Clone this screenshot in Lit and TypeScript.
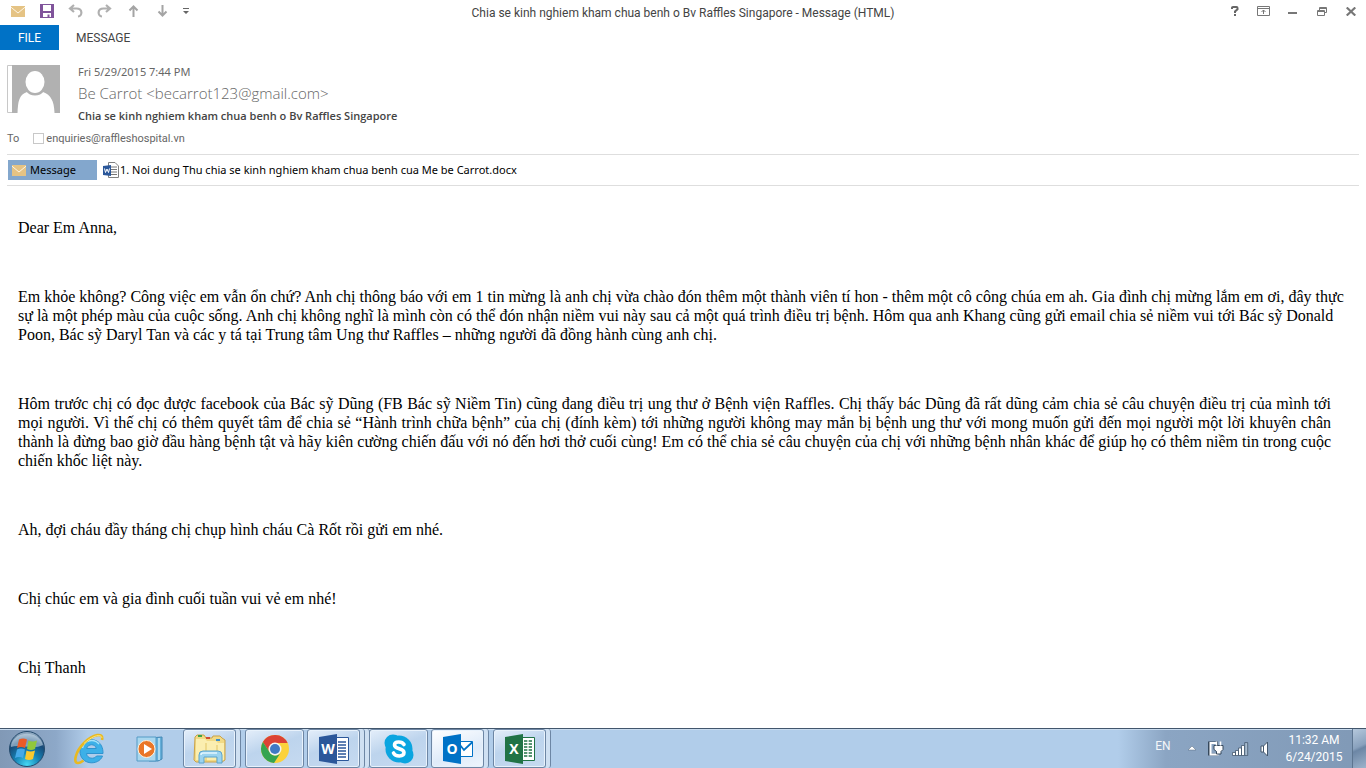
import { LitElement, html, css, svg } from "lit";
import { customElement } from "lit/decorators.js";

const envelope = html`<svg width="14" height="11" viewBox="0 0 14 11" aria-hidden="true">
  <rect width="14" height="11" fill="#e5c384" />
  <path d="M0 1.200L7 7l7-5.800" fill="none" stroke="#fdf6e6" stroke-width="1" />
</svg>`;

@customElement("title-bar")
export class TitleBar extends LitElement {
  static styles = css`
    :host { display: block; font-family: Roboto, "Open Sans", sans-serif; font-size: 12px; color: #444; }
    .bar { display: grid; grid-template-columns: 1fr auto 1fr; align-items: center; height: 25px; }
    .group { display: flex; align-items: center; height: 22px; }
    .quick { padding-left: 3px; align-self: start; }
    .window { justify-content: flex-end; align-self: start; padding-right: 1px; }
    h1 { margin: 0; font-size: 12px; font-weight: 400; line-height: 20px; }
    button { border: 0; padding: 0; background: none; width: 29px; height: 22px; display: grid; place-items: center; color: #777; }
    .narrow { width: 18px; }
    .tabs { display: flex; height: 25px; }
    .tab { width: auto; height: 25px; font: inherit; line-height: 24px; color: #444; padding: 1px 17px 0; }
    .file { width: 59px; background: #0072c6; color: #fff; padding: 1px 0 0; }
  `;
  render() {
    return html`
      <header class="bar">
        <div class="group quick">
          <button aria-label="Mail">${envelope}</button>
          <button aria-label="Save"><svg width="14" height="14" viewBox="0 0 14 14"><path d="M0 0h14v14H0z" fill="#80549b"/><path d="M3 1h8v6H3zM3 9h8v4H9.500v-2.500h-2V13H3z" fill="#fff"/></svg></button>
          <button aria-label="Undo"><svg width="15" height="14" viewBox="0 0 15 14" fill="none" stroke="#b0b0b0" stroke-width="2.200"><path d="M6 1L2 4.500 6 8M2 4.500h6.500c6.500 0 6 7.500 1.500 8"/></svg></button>
          <button aria-label="Redo"><svg width="15" height="14" viewBox="0 0 15 14" fill="none" stroke="#b0b0b0" stroke-width="2.200"><path d="M9 1l4 3.500L9 8M13 4.500H6.500c-6.500 0-6 7.500-1.500 8"/></svg></button>
          <button aria-label="Previous item"><svg width="11" height="12" viewBox="0 0 11 12" fill="none" stroke="#a4a4a4" stroke-width="2"><path d="M5.500 12V2M1.500 5.500l4-4 4 4"/></svg></button>
          <button aria-label="Next item"><svg width="11" height="12" viewBox="0 0 11 12" fill="none" stroke="#a4a4a4" stroke-width="2"><path d="M5.500 0v10M1.500 6.500l4 4 4-4"/></svg></button>
          <button class="narrow" aria-label="Customize toolbar"><svg width="6" height="6" viewBox="0 0 6 6" fill="#666"><path d="M0 0h6v1H0zM0 3h6L3 6z"/></svg></button>
        </div>
        <h1>Chia se kinh nghiem kham chua benh o Bv Raffles Singapore - Message (HTML)</h1>
        <div class="group window">
          <button aria-label="Help"><svg width="8" height="10" viewBox="0 0 8 10"><path d="M1 3V1.800Q1 1 2 1h3.500Q6.500 1 6.500 2v1.200L4 5.500V7" fill="none" stroke="#666" stroke-width="2"/><path d="M3 8h2v2H3z" fill="#666"/></svg></button>
          <button aria-label="Ribbon display options"><svg width="13" height="10" viewBox="0 0 13 10" fill="none" stroke="#777"><path d="M.5.500h12v9H.500zM0 2.500h13M6.500 8V4M4.500 6L6.500 4l2 2"/></svg></button>
          <button aria-label="Minimize"><svg width="9" height="6" viewBox="0 0 9 6"><path d="M0 4h9v2H0z" fill="#777"/></svg></button>
          <button aria-label="Restore"><svg width="10" height="9" viewBox="0 0 10 9" fill="none" stroke="#777"><path d="M2.500 3V.500h7v5H8M2 1.500h8M.5 3.500h7v5h-7zM0 4.500h8"/></svg></button>
          <button aria-label="Close"><svg width="10" height="9" viewBox="0 0 10 9" stroke="#777" stroke-width="2.200"><path d="M.7.5l8.600 8M9.300.5l-8.600 8"/></svg></button>
        </div>
      </header>
      <nav class="tabs">
        <button class="tab file">FILE</button>
        <button class="tab">MESSAGE</button>
      </nav>
    `;
  }
}

@customElement("mail-header")
export class MailHeader extends LitElement {
  static styles = css`
    :host { display: block; padding: 15px 7px 0; font-family: "Noto Sans", "Open Sans", sans-serif; font-size: 11px; color: #666; }
    .sender { display: flex; gap: 18px; }
    .photo { display: block; flex: none; }
    .date { line-height: 14px; }
    .from { font-family: "Open Sans", sans-serif; font-size: 15px; font-weight: 300; line-height: 28px; }
    .subject { margin: 0; font-family: "Open Sans", sans-serif; font-size: 11px; font-weight: 600; line-height: 18px; color: #444; }
    .to { display: flex; align-items: center; height: 19px; margin-top: 4px; padding-bottom: 6px; border-bottom: 1px solid #dedede; font-family: Roboto, "Open Sans", sans-serif; }
    .to label { display: flex; align-items: center; gap: 2px; margin-left: 14px; }
    .to input { appearance: none; margin: 0; width: 11px; height: 11px; border: 1px solid #c8c8c8; }
    .files { display: flex; align-items: center; gap: 6px; padding: 5px 0 5px 1px; border-bottom: 1px solid #dedede; }
    button, a { display: flex; align-items: center; font: inherit; font-size: 11px; line-height: 18px; color: #000; text-decoration: none; }
    button { width: 89px; height: 20px; gap: 4px; border: 0; padding: 0 4px; background: #83a7cd; }
    a { gap: 1px; }
  `;
  render() {
    return html`
      <section class="sender">
        <svg class="photo" width="53" height="48" viewBox="0 0 53 48" role="img" aria-label="Contact photo">
          <path d="M.5.500h5v47h-5z" fill="#fff" stroke="#c8c8c8"/>
          <path d="M5 0h48v48H5z" fill="#b1b1b1"/>
          <path d="M10.500 48C11 36 12 30 20 27h16c8 3 11 9 11.500 21z" fill="#fff"/>
          <path d="M19 26c4 6 14 6 18 0z" fill="#b1b1b1"/>
          <ellipse cx="28" cy="17" rx="9.500" ry="11" fill="#fff"/>
        </svg>
        <div>
          <div class="date">Fri 5/29/2015 7:44 PM</div>
          <div class="from">Be Carrot &lt;becarrot123@gmail.com&gt;</div>
          <h2 class="subject">Chia se kinh nghiem kham chua benh o Bv Raffles Singapore</h2>
        </div>
      </section>
      <div class="to">
        <span>To</span>
        <label><input type="checkbox" />enquiries@raffleshospital.vn</label>
      </div>
      <div class="files">
        <button>${envelope}Message</button>
        <a href="#attachment">
          <svg width="16" height="16" viewBox="0 0 16 16" aria-hidden="true">
            <path d="M5.500.5h6.500l3.500 3.500v11.500h-10z" fill="#fff" stroke="#808080"/>
            <path d="M8 5h6M8 7.500h6M8 10h6M8 12.500h6" stroke="#777"/>
            <path d="M0 4l8-1v11l-8-1z" fill="#2b579a"/>
            <path d="M1.500 6.500l1 4 1.500-3.500 1.500 3.500 1-4" fill="none" stroke="#fff"/>
          </svg>1. Noi dung Thu chia se kinh nghiem kham chua benh cua Me be Carrot.docx
        </a>
      </div>
    `;
  }
}

const PARAGRAPHS = [
  ["Dear Em Anna,"],
  [
    "Em khỏe không? Công việc em vẫn ổn chứ? Anh chị thông báo với em 1 tin mừng là anh chị vừa chào đón thêm một thành viên tí hon - thêm một cô công chúa em ah. Gia đình chị mừng lắm em ơi, đây thực",
    "sự là một phép màu của cuộc sống. Anh chị không nghĩ là mình còn có thể đón nhận niềm vui này sau cả một quá trình điều trị bệnh. Hôm qua anh Khang cũng gửi email chia sẻ niềm vui tới Bác sỹ Donald",
    "Poon, Bác sỹ Daryl Tan và các y tá tại Trung tâm Ung thư Raffles – những người đã đồng hành cùng anh chị.",
  ],
  ["Hôm trước chị có đọc được facebook của Bác sỹ Dũng (FB Bác sỹ Niềm Tin) cũng đang điều trị ung thư ở Bệnh viện Raffles. Chị thấy bác Dũng đã rất dũng cảm chia sẻ câu chuyện điều trị của mình tới mọi người. Vì thế chị có thêm quyết tâm để chia sẻ “Hành trình chữa bệnh” của chị (đính kèm) tới những người không may mắn bị bệnh ung thư với mong muốn gửi đến mọi người một lời khuyên chân thành là đừng bao giờ đầu hàng bệnh tật và hãy kiên cường chiến đấu với nó đến hơi thở cuối cùng! Em có thể chia sẻ câu chuyện của chị với những bệnh nhân khác để giúp họ có thêm niềm tin trong cuộc chiến khốc liệt này."],
  ["Ah, đợi cháu đầy tháng chị chụp hình cháu Cà Rốt rồi gửi em nhé."],
  ["Chị chúc em và gia đình cuối tuần vui vẻ em nhé!"],
  ["Chị Thanh"],
];

@customElement("mail-body")
export class MailBody extends LitElement {
  static styles = css`
    :host { display: block; padding: 32px 35px 0 18px; font-family: "Liberation Serif", serif; font-size: 16px; line-height: 19px; color: #000; }
    p { margin: 0 0 50px; text-align: justify; }
    .line { display: block; }
    .line:not(:last-child) { text-align-last: justify; white-space: nowrap; }
  `;
  render() {
    return PARAGRAPHS.map((lines) => html`<p>${lines.map((line) => html`<span class="line">${line} </span>`)}</p>`);
  }
}

const officeIcon = (color: string, letter: string, sheet: unknown) => html`
  <svg width="32" height="32" viewBox="0 0 32 32" aria-hidden="true">
    ${sheet}
    <path d="M1 4l18-3v30L1 28z" fill="${color}"/>
    <text x="10" y="21" text-anchor="middle" font-family="Open Sans, sans-serif" font-weight="700" font-size="14" fill="#fff">${letter}</text>
  </svg>`;

const explorerIcon = html`<svg width="34" height="32" viewBox="0 0 34 32" aria-hidden="true">
  <path d="M2 4l2-2h7l2 3h6l1-2h7l2 2 3 2v20l-3 2H3l-2-2z" fill="#f2da85" stroke="#c9a24a"/>
  <path d="M3 6h9l2 2h9l2 2h6v17H3z" fill="#fbeeb0"/>
  <path d="M13 10v18M24 12v16" stroke="#e2c566"/>
  <path d="M5 2h4v2H5z" fill="#3ba349"/><path d="M13 4h4v2h-4z" fill="#cf4b32"/><path d="M23 6h4v2h-4z" fill="#3d8fc9"/>
  <path d="M6 30v-8q0-4 4-4h15q4 0 4 4v8h-5v-6H11v6z" fill="#9bd3ef" stroke="#5ba4cd"/>
  <path d="M8 22q0-2 2-2h14" fill="none" stroke="#e2f6ff" stroke-width="1.500"/>
</svg>`;

const chromeIcon = html`<svg width="30" height="30" viewBox="0 0 30 30" aria-hidden="true">
  <circle cx="15" cy="15" r="14" fill="#fbd23c"/>
  <path d="M2.900 8A14 14 0 0 1 27.600 9H15a6.500 6.500 0 0 0-6 8.500z" fill="#dc4235"/>
  <path d="M2.900 8A14 14 0 0 0 14 29l6.500-10a6.500 6.500 0 0 1-11-1z" fill="#35a450"/>
  <circle cx="15" cy="15" r="6.500" fill="#f4f4f4"/><circle cx="15" cy="15" r="5" fill="#4079c4"/>
</svg>`;

const skypeIcon = html`<svg width="32" height="32" viewBox="0 0 32 32" aria-hidden="true">
  <circle cx="16" cy="16" r="13.500" fill="#0ba5e0"/><circle cx="10" cy="10" r="8.500" fill="#0ba5e0"/><circle cx="22" cy="22" r="8.500" fill="#0ba5e0"/>
  <path d="M21 11.500C19 8 11.500 8 11.500 12c0 4.500 9.500 3 9.500 7.500 0 4.500-8.500 4.500-10.500.5" fill="none" stroke="#fff" stroke-width="3.600" stroke-linecap="round"/>
</svg>`;

const wordIcon = officeIcon("#2b579a", "W", svg`<path d="M18 4.500h12.500v23H18z" fill="#fff" stroke="#2b579a"/><path d="M20 9h8M20 12h8M20 15h8M20 18h8M20 21h8M20 24h8" stroke="#2b579a" stroke-width="1.300"/>`);
const outlookIcon = officeIcon("#0072c6", "O", svg`<path d="M18 8.500h12.500v15H18z" fill="#fff" stroke="#0072c6"/><path d="M18 12l4 5 8.500-8" fill="none" stroke="#0072c6" stroke-width="1.800"/>`);
const excelIcon = officeIcon("#217346", "X", svg`<path d="M18 4.500h12.500v23H18z" fill="#fff" stroke="#217346"/><path d="M20 8h8M20 11h8M20 14h8M20 17h8M20 20h8M20 23h8" stroke="#217346" stroke-width="1.700"/><path d="M24 6v20" stroke="#fff" stroke-width="1.300"/>`);

const TASKS = [
  { name: "File Explorer", icon: explorerIcon, kind: "stack", strips: 1 },
  { name: "Chrome", icon: chromeIcon, kind: "single", strips: 0 },
  { name: "Word", icon: wordIcon, kind: "stack", strips: 2 },
  { name: "Skype", icon: skypeIcon, kind: "single", strips: 0 },
  { name: "Outlook", icon: outlookIcon, kind: "stack active", strips: 1 },
  { name: "Excel", icon: excelIcon, kind: "stack", strips: 1 },
];

@customElement("task-bar")
export class TaskBar extends LitElement {
  static styles = css`
    :host {
      display: flex; align-items: stretch; height: 40px; box-sizing: border-box; border-top: 1px solid #42566c;
      box-shadow: inset 0 1px #c9dcef; color: #fff; font-family: Roboto, "Open Sans", sans-serif; font-size: 12px;
      background:
        linear-gradient(90deg, #8199b6, #8da8c8 56px, #b1cdea 88px, transparent 88px),
        linear-gradient(270deg, #8099b6, #8ba5c3 200px, #b1cdea 248px, transparent 248px), #b1cdea;
    }
    button { border: 0; padding: 0; background: none; display: grid; place-items: center; color: inherit; font: inherit; }
    .start { width: 54px; }
    .pin { width: 60px; margin-left: 6px; }
    .media { margin-left: 0; }
    .tasks { display: flex; gap: 3px; margin-left: 3px; }
    .task { display: flex; width: 59px; }
    .task button { flex: 1; border: 1px solid #6d86a4; border-radius: 3px; background: linear-gradient(160deg, #e4eefa, #bdd4ed 45%, #c6daf0); box-shadow: inset 0 0 0 1px #e8f2fc; }
    .task.stack button { flex: 0 0 53px; }
    .active button { background: linear-gradient(160deg, #fff, #dfebf9 60%, #edf5fd); }
    .strip { width: 4px; flex: none; border-right: 1px solid #6d86a4; border-radius: 0 3px 3px 0; background: #cfe0f2; }
    .tray { display: flex; align-items: center; margin-left: auto; }
    .lang { width: 34px; opacity: .9; padding-bottom: 6px; }
    .tray .small { width: 24px; height: 38px; }
    .clock { width: 76px; line-height: 17px; text-align: center; }
    .desktop { width: 14px; align-self: stretch; border-left: 1px solid #5d7590; background: linear-gradient(155deg, #b5c8dc, #89a1bd 45%, #6c86a5 52%, #9db3cb); }
  `;
  render() {
    return html`
      <button class="start" aria-label="Start"><svg width="38" height="38" viewBox="0 0 38 38">
        <defs>
          <radialGradient id="orb" cx=".5" cy=".95" r=".9"><stop offset="0" stop-color="#45d8f4"/><stop offset=".4" stop-color="#1683b5"/><stop offset=".75" stop-color="#174a78"/><stop offset="1" stop-color="#8ea8c0"/></radialGradient>
        </defs>
        <circle cx="19" cy="19" r="17.500" fill="url(#orb)" stroke="#244a6c"/>
        <path d="M3 15C7 0 31 0 35 15 25 20 12 14 3 17z" fill="#e0edf7" opacity=".5"/>
        <path d="M11 9.500q4-2 8 0l-2 8.500q-4-2-8 0z" fill="#ea5b27"/><path d="M20.500 10.500q4 2 8.500 0L27 19q-4 2-8 0z" fill="#91c83c"/>
        <path d="M9 19.500q4-2 8 0L15 28q-4-2-8 0z" fill="#45a9e8"/><path d="M18.500 20.500q4 2 8.500 0L25 29q-4 2-8 0z" fill="#fbc92e"/>
      </svg></button>
      <button class="pin" aria-label="Internet Explorer"><svg width="34" height="34" viewBox="0 0 34 34" fill="none">
        <path d="M30 21.500H13.500c.5 5.500 8 6 10 2.500h6C26 34 7 33.500 7 19 7 4 30.500 3 30 21.500zM13.700 16.500h9.600c-.8-5-8.600-5-9.600 0z" fill="#3db0e8" stroke="#2f93cf" fill-rule="evenodd"/>
        <path d="M9.500 16C11 8 21 6 26 12" stroke="#a5e3fa" stroke-width="1.500"/>
        <path d="M29 8C31 0 20 2 11 11 2 20 0 31.500 5 31c1.500 0 3.500-1 5.500-2.500" stroke="#e9b921" stroke-width="2.600"/>
        <path d="M29 6C28 1 19 4 11 11.500" stroke="#fbe57a"/>
      </svg></button>
      <button class="pin media" aria-label="Media Player"><svg width="30" height="28" viewBox="0 0 30 28">
        <path d="M14 3l13-1v22l-4 2H14z" fill="#66afd9" stroke="#4288b5"/><path d="M24 3v22" stroke="#c6e8f8" stroke-width="1.500"/>
        <path d="M2 2h19v24H2z" fill="#a9d7ef" stroke="#559bc6"/>
        <circle cx="11.500" cy="14" r="8.500" fill="#ea7627" stroke="#fff0dc"/><path d="M9 9l8 5-8 5z" fill="#fff"/>
      </svg></button>
      <nav class="tasks">
        ${TASKS.map((t) => html`<div class="task ${t.kind}">
          <button aria-label=${t.name}>${t.icon}</button>
          ${Array.from({ length: t.strips }, () => html`<span class="strip"></span>`)}
        </div>`)}
      </nav>
      <div class="tray">
        <button class="lang">EN</button>
        <button class="small" aria-label="Show hidden icons"><svg width="8" height="5" viewBox="0 0 8 5"><path d="M4 0l4 4H0z" fill="#fff" stroke="#54687e" stroke-width=".5"/></svg></button>
        <button class="small" aria-label="Power"><svg width="16" height="17" viewBox="0 0 16 17" fill="none">
          <path d="M1 2.500h8v12H1z" stroke="#34475b" stroke-width="2"/><path d="M8 3H2.500v11.500h7V12" stroke="#fff" stroke-width="2"/>
          <path d="M6 5.500h9v4l-2 2v2.500h-4.500v-2.500L6 9.500z" fill="#fff" stroke="#34475b"/><path d="M8.500 1.500v4M12.500 1.500v4" stroke="#fff" stroke-width="1.600"/>
        </svg></button>
        <button class="small" aria-label="Network"><svg width="17" height="14" viewBox="0 0 17 14" fill="#fff" stroke="#43576d" stroke-width=".8"><path d="M.5 10.500h3v3h-3zM3.500 8.500h3v5h-3zM6.500 6h3v7.500h-3zM9.500 3.500h3v10h-3z"/><path d="M12.700.6h3v13h-3z" fill="#a9bccf"/></svg></button>
        <button class="small" aria-label="Volume"><svg width="9" height="16" viewBox="0 0 9 16"><path d="M1 5h2.500l4-4v14l-4-4H1z" fill="#fff" stroke="#43576d"/><path d="M3.500 5v6" stroke="#43576d"/></svg></button>
        <div class="clock">11:32 AM<br />6/24/2015</div>
        <button class="desktop" aria-label="Show desktop"></button>
      </div>
    `;
  }
}

@customElement("app-root")
export class AppRoot extends LitElement {
  static styles = css`
    :host { display: flex; flex-direction: column; min-height: 100vh; background: #fff; }
    .content { flex: 1; }
  `;
  render() {
    return html`
      <title-bar></title-bar>
      <mail-header></mail-header>
      <mail-body class="content"></mail-body>
      <task-bar></task-bar>
    `;
  }
}
